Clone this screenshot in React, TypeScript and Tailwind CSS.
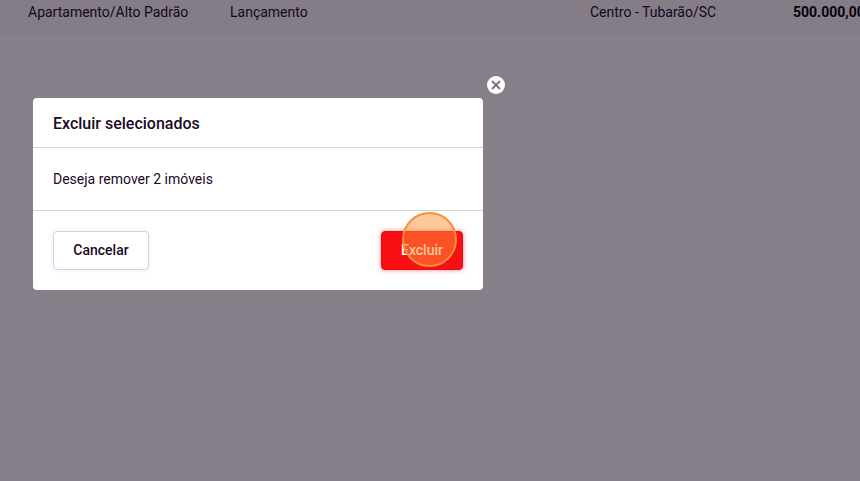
import React from 'react';

type Property = {
  type: string;
  status: string;
  location: string;
  price: string;
};

const properties: Property[] = [
  {
    type: 'Apartamento/Alto Padrão',
    status: 'Lançamento',
    location: 'Centro - Tubarão/SC',
    price: '500.000,00',
  },
];

const PropertyTable: React.FC = () => {
  return (
    <div className="overflow-hidden">
      <table className="min-w-[880px] w-full table-fixed text-left text-sm whitespace-nowrap">
        <colgroup>
          <col className="w-[202px]" />
          <col />
          <col className="w-[203px]" />
          <col className="w-[115px]" />
        </colgroup>
        <tbody>
          {properties.map((item) => (
            <tr key={item.type} className="bg-[#f8f8fa]">
              <td className="pt-0.5 pb-3 pl-7">{item.type}</td>
              <td className="pt-0.5 pb-3 pl-7">{item.status}</td>
              <td className="pt-0.5 pb-3 pl-7">{item.location}</td>
              <td className="pt-0.5 pb-3 pl-7 font-bold text-black">{item.price}</td>
            </tr>
          ))}
        </tbody>
      </table>
    </div>
  );
};

const DeleteDialog: React.FC = () => {
  return (
    <div className="fixed inset-0 bg-[#0f0115]/50 pt-[98px] pl-[33px]">
      <div
        role="dialog"
        aria-labelledby="dialog-title"
        className="relative w-full max-w-[450px] rounded bg-white"
      >
        <button
          type="button"
          aria-label="Fechar"
          className="absolute -top-[22px] -right-[22px] flex size-[18px] items-center justify-center rounded-full bg-white"
        >
          <svg viewBox="0 0 10 10" className="size-2.5" fill="none" stroke="#77707b" strokeWidth="1.8">
            <path d="M1 1l8 8M9 1L1 9" />
          </svg>
        </button>
        <header className="border-b border-[#d3d5d9] px-5 pt-[13px] pb-[11px]">
          <h2 id="dialog-title" className="text-base leading-[25px] font-medium">
            Excluir selecionados
          </h2>
        </header>
        <div className="border-b border-[#d3d5d9] p-5">
          <p className="text-sm leading-[22px]">Deseja remover 2 imóveis</p>
        </div>
        <footer className="flex justify-between p-5">
          <button
            type="button"
            className="min-w-24 rounded border border-[#cbd5e6] bg-white px-4 py-2 text-sm leading-[21px] font-medium shadow-[0_0_5px_#e6eefa]"
          >
            Cancelar
          </button>
          <div className="relative">
            <button
              type="button"
              className="min-w-[82px] rounded border border-[#d9101c] bg-[#f90f14] px-4 py-2 text-sm leading-[21px] font-medium text-white shadow-[0_0_5px_#f90f1480]"
            >
              Excluir
            </button>
            <span className="pointer-events-none absolute -top-[19px] left-[21px] size-[55px] rounded-full border-2 border-[#f5903c] bg-[#ff9137]/50" />
          </div>
        </footer>
      </div>
    </div>
  );
};

const App: React.FC = () => {
  return (
    <main className="min-h-screen bg-white font-['Roboto',sans-serif] text-[#1c0926]">
      <PropertyTable />
      <DeleteDialog />
    </main>
  );
};

export default App;
